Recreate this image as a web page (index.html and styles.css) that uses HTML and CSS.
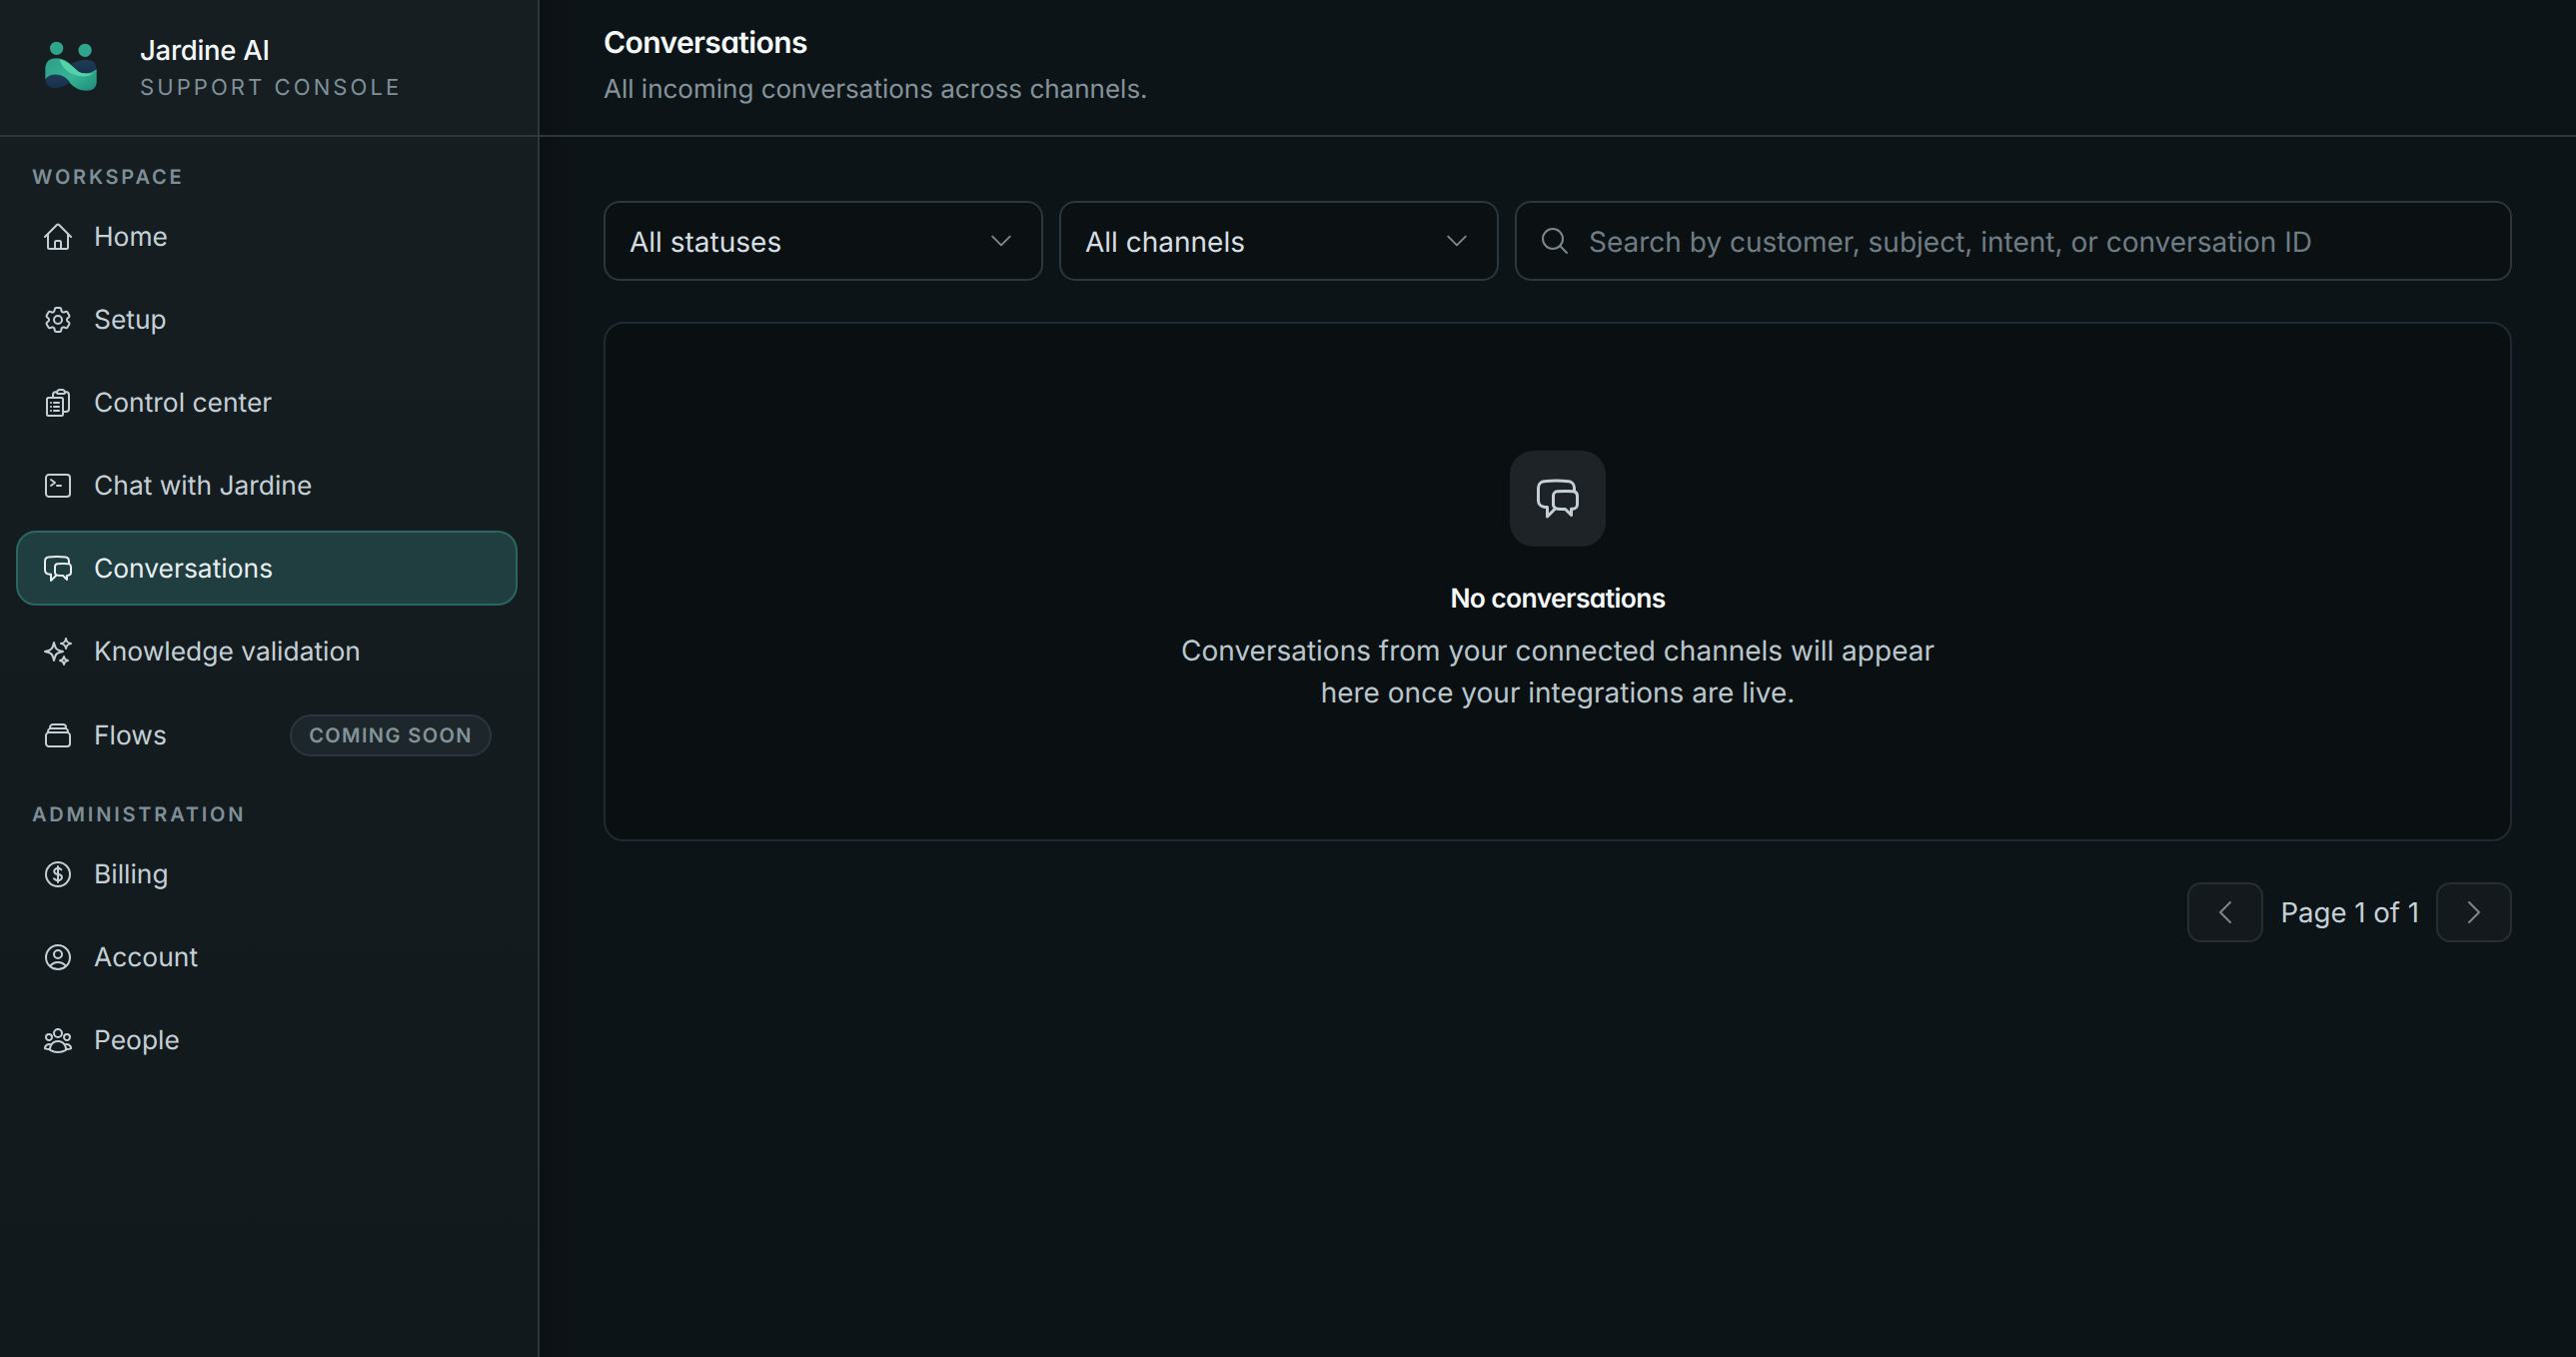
FILE: index.html
```html
<!DOCTYPE html>
<html lang="en">
<head>
<meta charset="utf-8">
<title>Conversations</title>
<link rel="stylesheet" href="styles.css">
</head>
<body>
<div class="app">
  <aside class="sidebar">
    <div class="brand">
      <svg class="logo" viewBox="70 60 170 160">
        <defs>
          <linearGradient id="ribbon" x1="0" y1="0" x2="1" y2="1">
            <stop offset="0" stop-color="#2f9c86"/>
            <stop offset="0.55" stop-color="#35b596"/>
            <stop offset="1" stop-color="#1f8a78"/>
          </linearGradient>
          <linearGradient id="lobe" x1="0" y1="0" x2="0" y2="1">
            <stop offset="0" stop-color="#1f3c58"/>
            <stop offset="1" stop-color="#16304a"/>
          </linearGradient>
        </defs>
        <circle cx="110" cy="85" r="20" fill="#2fa58c"/>
        <circle cx="196" cy="91" r="20" fill="#2fa58c"/>
        <path fill="url(#ribbon)" d="M76 142Q78 115 110 115Q135 115 160 140Q185 165 231 148L231 190Q229 213 200 213Q170 213 150 190Q130 165 76 178Z"/>
        <path fill="#55d2aa" d="M118 118Q135 120 160 142Q185 165 222 160Q195 178 165 165Q130 155 118 118Z"/>
        <path fill="url(#lobe)" d="M76 178Q90 162 115 165Q135 168 150 187Q130 205 105 206Q78 205 76 178Z"/>
        <path fill="url(#lobe)" d="M155 131Q180 118 205 120Q230 122 231 148Q200 170 175 154Q165 146 155 131Z"/>
      </svg>
      <div class="brand-text">
        <div class="brand-name">Jardine AI</div>
        <div class="brand-sub">SUPPORT CONSOLE</div>
      </div>
    </div>
    <nav class="nav">
      <div class="nav-label">WORKSPACE</div>
      <ul class="nav-list">
        <li class="nav-item"><svg class="icon" viewBox="0 0 24 24"><path d="m2.25 12 8.954-8.955c.44-.439 1.152-.439 1.591 0L21.75 12M4.5 9.75v10.125c0 .621.504 1.125 1.125 1.125H9.75v-4.875c0-.621.504-1.125 1.125-1.125h2.25c.621 0 1.125.504 1.125 1.125V21h4.125c.621 0 1.125-.504 1.125-1.125V9.75M8.25 21h8.25"/></svg><span>Home</span></li>
        <li class="nav-item"><svg class="icon" viewBox="0 0 24 24"><path d="M9.594 3.94c.09-.542.56-.94 1.11-.94h2.593c.55 0 1.02.398 1.11.94l.213 1.281c.063.374.313.686.645.87.074.04.147.083.22.127.325.196.72.257 1.075.124l1.217-.456a1.125 1.125 0 0 1 1.37.49l1.296 2.247a1.125 1.125 0 0 1-.26 1.431l-1.003.827c-.293.241-.438.613-.43.992a7.723 7.723 0 0 1 0 .255c-.008.378.137.75.43.991l1.004.827c.424.35.534.955.26 1.43l-1.298 2.247a1.125 1.125 0 0 1-1.369.491l-1.217-.456c-.355-.133-.75-.072-1.076.124a6.47 6.47 0 0 1-.22.128c-.331.183-.581.495-.644.869l-.213 1.281c-.09.543-.56.94-1.11.94h-2.594c-.55 0-1.019-.398-1.11-.94l-.213-1.281c-.062-.374-.312-.686-.644-.87a6.52 6.52 0 0 1-.22-.127c-.325-.196-.72-.257-1.076-.124l-1.217.456a1.125 1.125 0 0 1-1.369-.49l-1.297-2.247a1.125 1.125 0 0 1 .26-1.431l1.004-.827c.292-.24.437-.613.43-.991a6.932 6.932 0 0 1 0-.255c.007-.38-.138-.751-.43-.992l-1.004-.827a1.125 1.125 0 0 1-.26-1.43l1.297-2.247a1.125 1.125 0 0 1 1.37-.491l1.216.456c.356.133.751.072 1.076-.124.072-.044.146-.086.22-.128.332-.183.582-.495.644-.869l.214-1.28Z"/><path d="M15 12a3 3 0 1 1-6 0 3 3 0 0 1 6 0Z"/></svg><span>Setup</span></li>
        <li class="nav-item"><svg class="icon" viewBox="0 0 24 24"><path d="M9 12h3.75M9 15h3.75M9 18h3.75m3 .75H18a2.25 2.25 0 0 0 2.25-2.25V6.108c0-1.135-.845-2.098-1.976-2.192a48.424 48.424 0 0 0-1.123-.08m-5.801 0c-.065.21-.1.433-.1.664 0 .414.336.75.75.75h4.5a.75.75 0 0 0 .75-.75 2.25 2.25 0 0 0-.1-.664m-5.8 0A2.251 2.251 0 0 1 13.5 2.25H15c1.012 0 1.867.668 2.15 1.586m-5.8 0c-.376.023-.75.05-1.124.08C9.095 4.01 8.25 4.973 8.25 6.108V8.25m0 0H4.875c-.621 0-1.125.504-1.125 1.125v11.25c0 .621.504 1.125 1.125 1.125h9.75c.621 0 1.125-.504 1.125-1.125V9.375c0-.621-.504-1.125-1.125-1.125H8.25ZM6.75 12h.008v.008H6.75V12Zm0 3h.008v.008H6.75V15Zm0 3h.008v.008H6.75V18Z"/></svg><span>Control center</span></li>
        <li class="nav-item"><svg class="icon" viewBox="0 0 24 24"><path d="m6.75 7.5 3 2.25-3 2.25m4.5 0h3m-9 8.25h13.5A2.25 2.25 0 0 0 21 18V6a2.25 2.25 0 0 0-2.25-2.25H5.25A2.25 2.25 0 0 0 3 6v12a2.25 2.25 0 0 0 2.25 2.25Z"/></svg><span>Chat with Jardine</span></li>
        <li class="nav-item active"><svg class="icon" viewBox="0 0 24 24"><path d="M20.25 8.511c.884.284 1.5 1.128 1.5 2.097v4.286c0 1.136-.847 2.1-1.98 2.193-.34.027-.68.052-1.02.072v3.091l-3-3c-1.354 0-2.694-.055-4.02-.163a2.115 2.115 0 0 1-.825-.242m9.345-8.334a2.126 2.126 0 0 0-.476-.095 48.64 48.64 0 0 0-8.048 0c-1.131.094-1.976 1.057-1.976 2.192v4.286c0 .837.46 1.58 1.155 1.951m9.345-8.334V6.637c0-1.621-1.152-3.026-2.76-3.235A48.455 48.455 0 0 0 11.25 3c-2.115 0-4.198.137-6.24.402-1.608.209-2.76 1.614-2.76 3.235v6.226c0 1.621 1.152 3.026 2.76 3.235.577.075 1.157.14 1.74.194V21l4.155-4.155"/></svg><span>Conversations</span></li>
        <li class="nav-item"><svg class="icon" viewBox="0 0 24 24"><path d="M9.813 15.904 9 18.75l-.813-2.846a4.5 4.5 0 0 0-3.09-3.09L2.25 12l2.846-.813a4.5 4.5 0 0 0 3.09-3.09L9 5.25l.813 2.846a4.5 4.5 0 0 0 3.09 3.09L15.75 12l-2.846.813a4.5 4.5 0 0 0-3.09 3.09ZM18.259 8.715 18 9.75l-.259-1.035a3.375 3.375 0 0 0-2.455-2.456L14.25 6l1.036-.259a3.375 3.375 0 0 0 2.455-2.456L18 2.25l.259 1.035a3.375 3.375 0 0 0 2.456 2.456L21.75 6l-1.035.259a3.375 3.375 0 0 0-2.456 2.456ZM16.894 20.567 16.5 21.75l-.394-1.183a2.25 2.25 0 0 0-1.423-1.423L13.5 18.75l1.183-.394a2.25 2.25 0 0 0 1.423-1.423l.394-1.183.394 1.183a2.25 2.25 0 0 0 1.423 1.423l1.183.394-1.183.394a2.25 2.25 0 0 0-1.423 1.423Z"/></svg><span>Knowledge validation</span></li>
        <li class="nav-item flows"><svg class="icon" viewBox="0 0 24 24"><path d="M6 6.878V6a2.25 2.25 0 0 1 2.25-2.25h7.5A2.25 2.25 0 0 1 18 6v.878m-12 0c.235-.083.487-.128.75-.128h10.5c.263 0 .515.045.75.128m-12 0A2.25 2.25 0 0 0 4.5 9v.878m13.5-3A2.25 2.25 0 0 1 19.5 9v.878m0 0a2.246 2.246 0 0 0-.75-.128H5.25c-.263 0-.515.045-.75.128m15 0A2.25 2.25 0 0 1 21 12v6a2.25 2.25 0 0 1-2.25 2.25H5.25A2.25 2.25 0 0 1 3 18v-6c0-.98.626-1.813 1.5-2.122"/></svg><span>Flows</span><span class="pill">COMING SOON</span></li>
      </ul>
      <div class="nav-label admin">ADMINISTRATION</div>
      <ul class="nav-list">
        <li class="nav-item"><svg class="icon" viewBox="0 0 24 24"><path d="M12 6v12m-3-2.818.879.659c1.171.879 3.07.879 4.242 0 1.172-.879 1.172-2.303 0-3.182C13.536 12.219 12.768 12 12 12c-.725 0-1.45-.22-2.003-.659-1.106-.879-1.106-2.303 0-3.182s2.9-.879 4.006 0l.415.33M21 12a9 9 0 1 1-18 0 9 9 0 0 1 18 0Z"/></svg><span>Billing</span></li>
        <li class="nav-item"><svg class="icon" viewBox="0 0 24 24"><path d="M17.982 18.725A7.488 7.488 0 0 0 12 15.75a7.488 7.488 0 0 0-5.982 2.975m11.963 0a9 9 0 1 0-11.963 0m11.963 0A8.966 8.966 0 0 1 12 21a8.966 8.966 0 0 1-5.982-2.275M15 9.75a3 3 0 1 1-6 0 3 3 0 0 1 6 0Z"/></svg><span>Account</span></li>
        <li class="nav-item"><svg class="icon" viewBox="0 0 24 24"><path d="M18 18.72a9.094 9.094 0 0 0 3.741-.479 3 3 0 0 0-4.682-2.72m.94 3.198.001.031c0 .225-.012.447-.037.666A11.944 11.944 0 0 1 12 21c-2.17 0-4.207-.576-5.963-1.584A6.062 6.062 0 0 1 6 18.719m12 0a5.971 5.971 0 0 0-.941-3.197m0 0A5.995 5.995 0 0 0 12 12.75a5.995 5.995 0 0 0-5.058 2.772m0 0a3 3 0 0 0-4.681 2.72 8.986 8.986 0 0 0 3.74.477m.94-3.197a5.971 5.971 0 0 0-.94 3.197M15 6.75a3 3 0 1 1-6 0 3 3 0 0 1 6 0Zm6 3a2.25 2.25 0 1 1-4.5 0 2.25 2.25 0 0 1 4.5 0Zm-13.5 0a2.25 2.25 0 1 1-4.5 0 2.25 2.25 0 0 1 4.5 0Z"/></svg><span>People</span></li>
      </ul>
    </nav>
  </aside>
  <main class="main">
    <header class="page-header">
      <h1 class="page-title">Conversations</h1>
      <p class="page-sub">All incoming conversations across channels.</p>
    </header>
    <section class="content">
      <div class="filters">
        <div class="select"><span class="select-text">All statuses</span><svg class="icon chev" viewBox="0 0 24 24"><path d="m19.5 8.25-7.5 7.5-7.5-7.5"/></svg></div>
        <div class="select"><span class="select-text">All channels</span><svg class="icon chev" viewBox="0 0 24 24"><path d="m19.5 8.25-7.5 7.5-7.5-7.5"/></svg></div>
        <div class="search"><svg class="icon mute" viewBox="0 0 24 24"><path d="m21 21-5.197-5.197m0 0A7.5 7.5 0 1 0 5.196 5.196a7.5 7.5 0 0 0 10.607 10.607Z"/></svg><span class="select-text">Search by customer, subject, intent, or conversation ID</span></div>
      </div>
      <div class="empty">
        <div class="empty-icon"><svg class="icon" viewBox="0 0 24 24"><path d="M20.25 8.511c.884.284 1.5 1.128 1.5 2.097v4.286c0 1.136-.847 2.1-1.98 2.193-.34.027-.68.052-1.02.072v3.091l-3-3c-1.354 0-2.694-.055-4.02-.163a2.115 2.115 0 0 1-.825-.242m9.345-8.334a2.126 2.126 0 0 0-.476-.095 48.64 48.64 0 0 0-8.048 0c-1.131.094-1.976 1.057-1.976 2.192v4.286c0 .837.46 1.58 1.155 1.951m9.345-8.334V6.637c0-1.621-1.152-3.026-2.76-3.235A48.455 48.455 0 0 0 11.25 3c-2.115 0-4.198.137-6.24.402-1.608.209-2.76 1.614-2.76 3.235v6.226c0 1.621 1.152 3.026 2.76 3.235.577.075 1.157.14 1.74.194V21l4.155-4.155"/></svg></div>
        <h2 class="empty-title">No conversations</h2>
        <p class="empty-text">Conversations from your connected channels will appear here once your integrations are live.</p>
      </div>
      <div class="pager">
        <div class="page-btn"><svg class="icon chev" viewBox="0 0 24 24"><path d="M15.75 19.5 8.25 12l7.5-7.5"/></svg></div>
        <span class="page-label">Page 1 of 1</span>
        <div class="page-btn"><svg class="icon chev" viewBox="0 0 24 24"><path d="m8.25 4.5 7.5 7.5-7.5 7.5"/></svg></div>
      </div>
    </section>
  </main>
</div>
</body>
</html>
```
FILE: styles.css
```css
* { box-sizing: border-box; }
html, body { margin: 0; height: 100%; }
body {
  background: #0d1417;
  color: #c4d0d6;
  font-family: "Inter", "Liberation Sans", sans-serif;
  text-rendering: geometricPrecision;
  overflow: hidden;
}
.app { display: flex; height: 1358px; }
.sidebar {
  width: 540px;
  flex: none;
  background: linear-gradient(180deg, #161e22 0%, #12191c 100%);
  border-right: 2px solid #2b363d;
}
.brand {
  height: 137px;
  display: flex;
  align-items: center;
  gap: 40px;
  padding-left: 43px;
  border-bottom: 2px solid #2b363d;
}
.logo { width: 57px; height: 53px; flex: none; margin-top: -2px; }
.brand-name { font-size: 27.5px; font-weight: 500; line-height: 36px; color: #f2f6f7; letter-spacing: -0.01em; }
.brand-sub { font-size: 22px; line-height: 32px; margin-top: 4px; color: #7f9099; letter-spacing: 0.14em; }
.nav { padding: 28px 20px 0 16px; }
.nav-label {
  font-size: 20px;
  line-height: 24px;
  font-weight: 600;
  letter-spacing: 0.14em;
  color: #7f8f97;
  padding-left: 16px;
  margin-bottom: 10px;
}
.nav-label.admin { margin-top: 29px; margin-bottom: 10px; }
.nav-list { list-style: none; margin: 0; padding: 0; display: flex; flex-direction: column; gap: 8px; }
.nav-item {
  display: flex;
  align-items: center;
  gap: 20px;
  height: 75px;
  padding: 0 24px;
  border: 2px solid transparent;
  border-radius: 20px;
  font-size: 26.4px;
  color: #c4d0d6;
}
.nav-item.flows { height: 77px; }
.nav-item.active { background: #203d40; border-color: #2a6763; color: #e8eff1; }
.icon {
  width: 32px;
  height: 32px;
  flex: none;
  fill: none;
  stroke: currentColor;
  stroke-width: 1.5;
  stroke-linecap: round;
  stroke-linejoin: round;
}
.pill {
  margin-left: auto;
  height: 42px;
  width: 202px;
  display: flex;
  align-items: center;
  justify-content: center;
  border: 2px solid #2b363e;
  border-radius: 21px;
  background: #1d262b;
  color: #84939a;
  font-size: 20px;
  font-weight: 600;
  letter-spacing: 0.07em;
}
.main {
  flex: 1;
  min-width: 0;
  background: linear-gradient(90deg, #0b1013 0, #0d1417 40px);
}
.page-header {
  height: 137px;
  padding: 23px 64px 0;
  border-bottom: 2px solid #2b363d;
}
.page-title {
  margin: 0;
  font-size: 30px;
  line-height: 40px;
  font-weight: 600;
  letter-spacing: -0.02em;
  color: #f6f9fa;
  font-feature-settings: "cv11";
}
.page-sub { margin: 9px 0 0; font-size: 26px; line-height: 36px; color: #84939a; }
.content { padding: 64px 64px 0; display: flex; flex-direction: column; }
.filters { display: flex; gap: 16px; }
.select, .search {
  height: 80px;
  display: flex;
  align-items: center;
  border: 2px solid #2b363d;
  border-radius: 16px;
  background: #0b1013;
  font-size: 28px;
}
.select-text { padding-top: 2px; }
.select { width: 440px; flex: none; padding: 0 26px 0 24px; justify-content: space-between; color: #d5dee2; }
.select .chev { width: 28px; height: 28px; stroke-width: 1.7; }
.chev { color: #7c878d; }
.search { flex: 1; padding: 0 24px 0 22px; gap: 18px; color: #6e7c84; }
.mute { color: #7c878d; }
.empty {
  margin-top: 41px;
  height: 520px;
  border: 2px solid #1f2a34;
  border-radius: 20px;
  background: #0a0f12;
  display: flex;
  flex-direction: column;
  align-items: center;
  padding-top: 127px;
}
.empty-icon {
  width: 96px;
  height: 96px;
  border-radius: 24px;
  background: #1d2327;
  display: flex;
  align-items: center;
  justify-content: center;
  color: #c4d0d6;
}
.empty-icon .icon { width: 48px; height: 48px; }
.empty-title {
  margin: 36px 0 0;
  font-size: 26.5px;
  line-height: 32px;
  font-weight: 600;
  letter-spacing: -0.025em;
  color: #f6f9fa;
  font-feature-settings: "cv11";
}
.empty-text {
  margin: 15px 0 0;
  width: 780px;
  text-align: center;
  font-size: 28px;
  line-height: 42px;
  color: #b9c6cc;
}
.pager { margin-top: 41px; display: flex; align-items: center; justify-content: flex-end; gap: 17px; }
.page-btn {
  width: 76px;
  height: 60px;
  display: flex;
  align-items: center;
  justify-content: center;
  border: 2px solid #252e34;
  border-radius: 14px;
  background: #14191d;
}
.page-label { font-size: 27.6px; color: #c4d0d6; }
```
